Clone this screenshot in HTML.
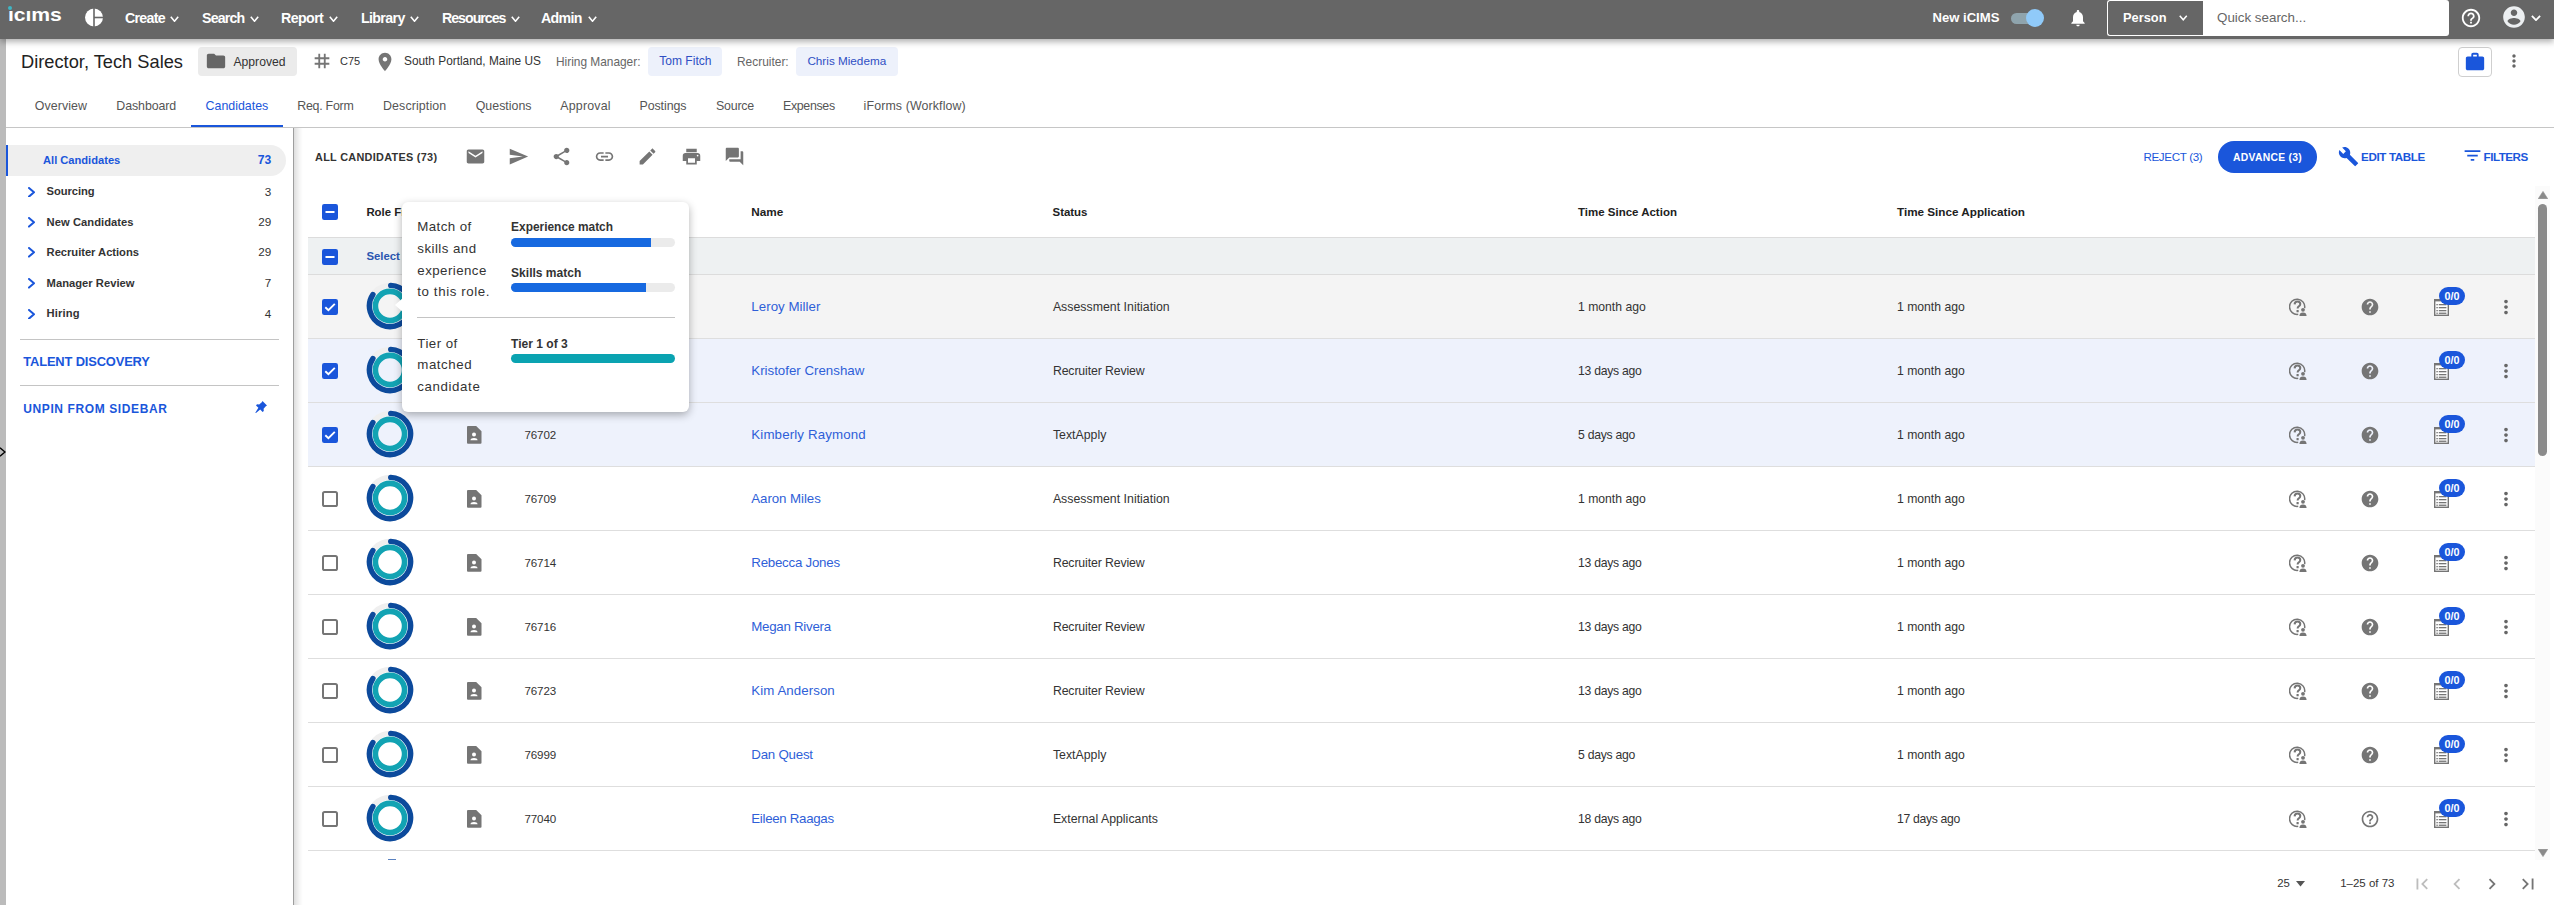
<!DOCTYPE html><html><head><meta charset="utf-8"><style>
html,body{margin:0;padding:0;}
body{width:2554px;height:905px;overflow:hidden;position:relative;background:#fff;font-family:"Liberation Sans",sans-serif;}
.t{position:absolute;white-space:nowrap;line-height:1;}
.b{position:absolute;display:block;}
</style></head><body>
<div class="b" style="left:0px;top:38px;width:6px;height:867px;background:#bbbbbb"></div>
<div class="b" style="left:294px;top:128px;width:9px;height:777px;background:linear-gradient(90deg,rgba(0,0,0,0.13),rgba(0,0,0,0.04) 60%,rgba(0,0,0,0))"></div>
<div class="b" style="left:6px;top:127px;width:2548px;height:1px;background:#c6c6c6"></div>
<div class="b" style="left:293px;top:128px;width:1px;height:777px;background:#9e9e9e"></div>
<div class="b" style="left:0px;top:0px;width:2554px;height:39px;background:#666666;box-shadow:0 3px 6px rgba(0,0,0,0.3);z-index:5"></div>
<div style="position:absolute;left:0;top:0;width:2554px;height:38px;z-index:6">
<div class="t" style="left:7.60px;top:6.40px;font-size:18.90px;color:#fff;font-weight:700;letter-spacing:-0.1px;transform:scaleX(1.12);transform-origin:0 0;">&#x131;c&#x131;ms</div>
<div class="b" style="left:8px;top:5.6px;width:4.199999999999999px;height:4.200000000000001px;background:#3fb6c4;border-radius:50%"></div>
<svg class="b" style="left:85px;top:8px;" width="18" height="19" viewBox="0 0 18 19"><circle cx="9" cy="9.5" r="9" fill="#fff"/><rect x="8.2" y="0" width="1.6" height="19" fill="#666"/><rect x="9" y="8.7" width="10" height="1.6" fill="#666"/></svg>
<div class="t" style="left:125.00px;top:10.58px;font-size:14.20px;color:#fff;font-weight:700;letter-spacing:-0.7px;">Create</div>
<svg class="b" style="left:170.4px;top:15.5px;" width="9" height="6" viewBox="0 0 9 6"><path d="M0.8 0.8 L4.5 5.2 L8.2 0.8" fill="none" stroke="#fff" stroke-width="1.6"/></svg>
<div class="t" style="left:202.00px;top:10.58px;font-size:14.20px;color:#fff;font-weight:700;letter-spacing:-0.827px;">Search</div>
<svg class="b" style="left:250px;top:15.5px;" width="9" height="6" viewBox="0 0 9 6"><path d="M0.8 0.8 L4.5 5.2 L8.2 0.8" fill="none" stroke="#fff" stroke-width="1.6"/></svg>
<div class="t" style="left:281.00px;top:10.58px;font-size:14.20px;color:#fff;font-weight:700;letter-spacing:-0.575px;">Report</div>
<svg class="b" style="left:329px;top:15.5px;" width="9" height="6" viewBox="0 0 9 6"><path d="M0.8 0.8 L4.5 5.2 L8.2 0.8" fill="none" stroke="#fff" stroke-width="1.6"/></svg>
<div class="t" style="left:361.00px;top:10.58px;font-size:14.20px;color:#fff;font-weight:700;letter-spacing:-0.634px;">Library</div>
<svg class="b" style="left:410px;top:15.5px;" width="9" height="6" viewBox="0 0 9 6"><path d="M0.8 0.8 L4.5 5.2 L8.2 0.8" fill="none" stroke="#fff" stroke-width="1.6"/></svg>
<div class="t" style="left:442.00px;top:10.58px;font-size:14.20px;color:#fff;font-weight:700;letter-spacing:-1.012px;">Resources</div>
<svg class="b" style="left:511px;top:15.5px;" width="9" height="6" viewBox="0 0 9 6"><path d="M0.8 0.8 L4.5 5.2 L8.2 0.8" fill="none" stroke="#fff" stroke-width="1.6"/></svg>
<div class="t" style="left:541.00px;top:10.58px;font-size:14.20px;color:#fff;font-weight:700;letter-spacing:-0.675px;">Admin</div>
<svg class="b" style="left:588px;top:15.5px;" width="9" height="6" viewBox="0 0 9 6"><path d="M0.8 0.8 L4.5 5.2 L8.2 0.8" fill="none" stroke="#fff" stroke-width="1.6"/></svg>
<div class="t" style="left:1932.50px;top:11.42px;font-size:13.09px;color:#fff;font-weight:700;">New iCIMS</div>
<div class="b" style="left:2011px;top:12.8px;width:32px;height:10.8px;background:#8fa4ad;border-radius:6px"></div>
<div class="b" style="left:2026px;top:9px;width:18px;height:18px;background:#90caf9;border-radius:50%"></div>
<svg class="b" style="left:2067.5px;top:8px;" width="20" height="20" viewBox="0 0 24 24"><path fill="#fff" d="M12 22c1.1 0 2-.9 2-2h-4c0 1.1.89 2 2 2zm6-6v-5c0-3.07-1.64-5.64-4.5-6.32V4c0-.83-.67-1.5-1.5-1.5s-1.5.67-1.5 1.5v.68C7.63 5.36 6 7.92 6 11v5l-2 2v1h16v-1l-2-2z"/></svg>
<div class="b" style="left:2107px;top:0px;width:96px;height:36px;border:1px solid #fff;border-right:none;border-radius:3px 0 0 3px;box-sizing:border-box"></div>
<div class="t" style="left:2123.00px;top:11.64px;font-size:12.83px;color:#fff;font-weight:700;">Person</div>
<svg class="b" style="left:2179px;top:15px;" width="8.5" height="5.5" viewBox="0 0 8.5 5.5"><path d="M0.75 0.75 L4.25 4.75 L7.75 0.75" fill="none" stroke="#fff" stroke-width="1.5"/></svg>
<div class="b" style="left:2203px;top:0px;width:246px;height:36px;background:#fff;border-radius:0 3px 3px 0"></div>
<div class="t" style="left:2217.00px;top:11.49px;font-size:13.36px;color:#666;font-weight:400;">Quick search...</div>
<svg class="b" style="left:2460px;top:7px;" width="22" height="22" viewBox="0 0 24 24"><path fill="#fff" d="M11 18h2v-2h-2v2zm1-16C6.48 2 2 6.48 2 12s4.48 10 10 10 10-4.48 10-10S17.52 2 12 2zm0 18c-4.41 0-8-3.59-8-8s3.59-8 8-8 8 3.59 8 8-3.59 8-8 8zm0-14c-2.21 0-4 1.79-4 4h2c0-1.1.9-2 2-2s2 .9 2 2c0 2-3 1.75-3 5h2c0-2.25 3-2.5 3-5 0-2.21-1.79-4-4-4z"/></svg>
<svg class="b" style="left:2501px;top:4.3px;" width="26" height="26" viewBox="0 0 24 24"><path fill="#eceff1" d="M12 2C6.48 2 2 6.480 2 12s4.48 10 10 10 10-4.48 10-10S17.52 2 12 2zm0 3c1.66 0 3 1.34 3 3s-1.34 3-3 3-3-1.34-3-3 1.34-3 3-3zm0 14.2c-2.5 0-4.71-1.28-6-3.22.03-1.99 4-3.08 6-3.08 1.99 0 5.970 1.09 6 3.08-1.29 1.94-3.5 3.22-6 3.22z"/></svg>
<svg class="b" style="left:2531px;top:14.5px;" width="10" height="6" viewBox="0 0 10 6"><path d="M0.9 0.9 L5.0 5.1 L9.1 0.9" fill="none" stroke="#fff" stroke-width="1.8"/></svg>
</div>
<div class="t" style="left:21.00px;top:52.75px;font-size:18.26px;color:#222;font-weight:400;">Director, Tech Sales</div>
<div class="b" style="left:198px;top:47px;width:99px;height:29px;background:#ebebeb;border-radius:4px"></div>
<svg class="b" style="left:204.5px;top:50px;" width="22" height="22" viewBox="0 0 24 24"><path fill="#666" d="M10 4H4c-1.1 0-1.99.9-1.99 2L2 18c0 1.1.9 2 2 2h16c1.1 0 2-.9 2-2V8c0-1.1-.9-2-2-2h-8l-2-2z"/></svg>
<div class="t" style="left:233.50px;top:55.52px;font-size:12.15px;color:#333;font-weight:400;">Approved</div>
<svg class="b" style="left:311px;top:50px;" width="22" height="22" viewBox="0 0 24 24"><path fill="#757575" d="M20 10V8h-4V4h-2v4h-4V4H8v4H4v2h4v4H4v2h4v4h2v-4h4v4h2v-4h4v-2h-4v-4h4zm-6 4h-4v-4h4v4z"/></svg>
<div class="t" style="left:340.00px;top:56.48px;font-size:11.01px;color:#333;font-weight:400;">C75</div>
<svg class="b" style="left:374px;top:51px;" width="22" height="22" viewBox="0 0 24 24"><path fill="#757575" d="M12 2C8.13 2 5 5.13 5 9c0 5.25 7 13 7 13s7-7.75 7-13c0-3.87-3.13-7-7-7zm0 9.5c-1.38 0-2.5-1.12-2.5-2.5s1.12-2.5 2.5-2.5 2.5 1.12 2.5 2.5-1.12 2.5-2.5 2.5z"/></svg>
<div class="t" style="left:404.00px;top:55.77px;font-size:11.85px;color:#333;font-weight:400;">South Portland, Maine US</div>
<div class="t" style="left:556.00px;top:57.33px;font-size:11.89px;color:#666;font-weight:400;">Hiring Manager:</div>
<div class="b" style="left:648px;top:47px;width:74px;height:29px;background:#edf1fb;border-radius:4px"></div>
<div class="t" style="left:659.30px;top:54.80px;font-size:12.04px;color:#2f4fc4;font-weight:400;">Tom Fitch</div>
<div class="t" style="left:737.00px;top:57.30px;font-size:11.93px;color:#666;font-weight:400;">Recruiter:</div>
<div class="b" style="left:796px;top:47px;width:102px;height:29px;background:#edf1fb;border-radius:4px"></div>
<div class="t" style="left:807.40px;top:55.07px;font-size:11.73px;color:#2f4fc4;font-weight:400;">Chris Miedema</div>
<div class="b" style="left:2458px;top:46.5px;width:34px;height:30.0px;border:1px solid #cfcfcf;border-radius:4px;box-sizing:border-box"></div>
<svg class="b" style="left:2463.5px;top:50.5px;" width="22" height="22" viewBox="0 0 24 24"><path fill="#1a56db" d="M20 6h-4V4c0-1.11-.89-2-2-2h-4c-1.11 0-2 .89-2 2v2H4c-1.11 0-1.99.89-1.99 2L2 19c0 1.11.89 2 2 2h16c1.11 0 2-.89 2-2V8c0-1.11-.89-2-2-2zm-6 0h-4V4h4v2z"/></svg>
<svg class="b" style="left:2503.8px;top:51.2px;" width="20" height="20" viewBox="0 0 24 24"><path fill="#666" d="M12 8c1.1 0 2-.9 2-2s-.9-2-2-2-2 .9-2 2 .9 2 2 2zm0 2c-1.1 0-2 .9-2 2s.9 2 2 2 2-.9 2-2-.9-2-2-2zm0 6c-1.1 0-2 .9-2 2s.9 2 2 2 2-.9 2-2-.9-2-2-2z"/></svg>
<div class="t" style="left:34.80px;top:100.20px;font-size:12.40px;color:#555;font-weight:400;letter-spacing:0.066px;">Overview</div>
<div class="t" style="left:116.30px;top:100.20px;font-size:12.40px;color:#555;font-weight:400;letter-spacing:-0.084px;">Dashboard</div>
<div class="t" style="left:205.60px;top:100.20px;font-size:12.40px;color:#1a56db;font-weight:400;letter-spacing:-0.003px;">Candidates</div>
<div class="t" style="left:297.20px;top:100.20px;font-size:12.40px;color:#555;font-weight:400;letter-spacing:-0.24px;">Req. Form</div>
<div class="t" style="left:383.00px;top:100.20px;font-size:12.40px;color:#555;font-weight:400;letter-spacing:0.125px;">Description</div>
<div class="t" style="left:475.70px;top:100.20px;font-size:12.40px;color:#555;font-weight:400;letter-spacing:0.008px;">Questions</div>
<div class="t" style="left:560.30px;top:100.20px;font-size:12.40px;color:#555;font-weight:400;letter-spacing:0.195px;">Approval</div>
<div class="t" style="left:639.50px;top:100.20px;font-size:12.40px;color:#555;font-weight:400;letter-spacing:-0.082px;">Postings</div>
<div class="t" style="left:716.00px;top:100.20px;font-size:12.40px;color:#555;font-weight:400;letter-spacing:-0.214px;">Source</div>
<div class="t" style="left:783.00px;top:100.20px;font-size:12.40px;color:#555;font-weight:400;letter-spacing:-0.332px;">Expenses</div>
<div class="t" style="left:863.60px;top:100.20px;font-size:12.40px;color:#555;font-weight:400;letter-spacing:0.115px;">iForms (Workflow)</div>
<div class="b" style="left:191px;top:125px;width:92px;height:2px;background:#1a56db"></div>
<div class="b" style="left:6px;top:145px;width:280px;height:31px;background:#efefef;border-radius:0 15.5px 15.5px 0"></div>
<div class="b" style="left:6px;top:145px;width:2px;height:31px;background:#1a56db"></div>
<div class="t" style="left:43.00px;top:154.68px;font-size:11.13px;color:#1a56db;font-weight:700;">All Candidates</div>
<div class="t" style="left:257.80px;top:153.82px;font-size:12.14px;color:#1a56db;font-weight:700;">73</div>
<svg class="b" style="left:27.6px;top:186.8px;" width="7" height="10.6" viewBox="0 0 7 10.6"><path d="M1.0 1.0 L6.0 5.3 L1.0 9.6" fill="none" stroke="#1a56db" stroke-width="2" stroke-linecap="round" stroke-linejoin="round"/></svg>
<div class="t" style="left:46.60px;top:186.32px;font-size:11.20px;color:#333;font-weight:700;letter-spacing:-0.079px;">Sourcing</div>
<div class="t" style="left:264.80px;top:185.91px;font-size:11.69px;color:#333;font-weight:400;">3</div>
<svg class="b" style="left:27.6px;top:217.3px;" width="7" height="10.6" viewBox="0 0 7 10.6"><path d="M1.0 1.0 L6.0 5.3 L1.0 9.6" fill="none" stroke="#1a56db" stroke-width="2" stroke-linecap="round" stroke-linejoin="round"/></svg>
<div class="t" style="left:46.60px;top:216.82px;font-size:11.20px;color:#333;font-weight:700;letter-spacing:0.043px;">New Candidates</div>
<div class="t" style="left:258.30px;top:216.41px;font-size:11.69px;color:#333;font-weight:400;">29</div>
<svg class="b" style="left:27.6px;top:247.3px;" width="7" height="10.6" viewBox="0 0 7 10.6"><path d="M1.0 1.0 L6.0 5.3 L1.0 9.6" fill="none" stroke="#1a56db" stroke-width="2" stroke-linecap="round" stroke-linejoin="round"/></svg>
<div class="t" style="left:46.60px;top:246.82px;font-size:11.20px;color:#333;font-weight:700;letter-spacing:-0.032px;">Recruiter Actions</div>
<div class="t" style="left:258.30px;top:246.41px;font-size:11.69px;color:#333;font-weight:400;">29</div>
<svg class="b" style="left:27.6px;top:278.2px;" width="7" height="10.6" viewBox="0 0 7 10.6"><path d="M1.0 1.0 L6.0 5.3 L1.0 9.6" fill="none" stroke="#1a56db" stroke-width="2" stroke-linecap="round" stroke-linejoin="round"/></svg>
<div class="t" style="left:46.60px;top:277.72px;font-size:11.20px;color:#333;font-weight:700;letter-spacing:0.017px;">Manager Review</div>
<div class="t" style="left:264.80px;top:277.31px;font-size:11.69px;color:#333;font-weight:400;">7</div>
<svg class="b" style="left:27.6px;top:308.59999999999997px;" width="7" height="10.6" viewBox="0 0 7 10.6"><path d="M1.0 1.0 L6.0 5.3 L1.0 9.6" fill="none" stroke="#1a56db" stroke-width="2" stroke-linecap="round" stroke-linejoin="round"/></svg>
<div class="t" style="left:46.60px;top:308.12px;font-size:11.20px;color:#333;font-weight:700;letter-spacing:0.141px;">Hiring</div>
<div class="t" style="left:264.80px;top:307.71px;font-size:11.69px;color:#333;font-weight:400;">4</div>
<div class="b" style="left:20px;top:339px;width:259px;height:1px;background:#c4c4c4"></div>
<div class="t" style="left:23.30px;top:356.48px;font-size:12.90px;color:#1a56db;font-weight:700;letter-spacing:-0.157px;">TALENT DISCOVERY</div>
<div class="b" style="left:20px;top:385px;width:259px;height:1px;background:#c4c4c4"></div>
<div class="t" style="left:23.30px;top:403.24px;font-size:12.01px;color:#1a56db;font-weight:700;letter-spacing:0.6px;">UNPIN FROM SIDEBAR</div>
<svg class="b" style="left:255px;top:401px;" width="12" height="12" viewBox="0 0 12 12"><path fill="#1a56db" d="M7.5 0 L12 4.5 L10.8 5.2 L8.6 7.8 L8.8 10 L7.6 11 L5.2 8.6 L1 12 L0.3 11.7 L3.4 6.8 L1 4.4 L2 3.2 L4.2 3.4 L6.8 1.2 Z"/></svg>
<svg class="b" style="left:0px;top:447px;" width="6" height="10" viewBox="0 0 6 10"><path d="M0 0.8 L5 5 L0 9.2" fill="none" stroke="#000" stroke-width="1.4"/></svg>
<div class="t" style="left:315.00px;top:151.99px;font-size:10.87px;color:#333;font-weight:700;letter-spacing:0.3px;">ALL CANDIDATES (73)</div>
<svg class="b" style="left:465px;top:146px;" width="21" height="21" viewBox="0 0 24 24"><path fill="#757575" d="M20 4H4c-1.1 0-1.99.9-1.99 2L2 18c0 1.1.9 2 2 2h16c1.1 0 2-.9 2-2V6c0-1.1-.9-2-2-2zm0 4l-8 5-8-5V6l8 5 8-5v2z"/></svg>
<svg class="b" style="left:507.5px;top:146px;" width="21" height="21" viewBox="0 0 24 24"><path fill="#757575" d="M2.01 21L23 12 2.01 3 2 10l15 2-15 2z"/></svg>
<svg class="b" style="left:551px;top:146px;" width="21" height="21" viewBox="0 0 24 24"><path fill="#757575" d="M18 16.08c-.76 0-1.44.3-1.96.77L8.91 12.7c.05-.23.09-.46.09-.7s-.04-.47-.09-.7l7.05-4.11c.54.5 1.25.81 2.04.81 1.66 0 3-1.34 3-3s-1.34-3-3-3-3 1.34-3 3c0 .24.04.47.09.7L8.04 9.81C7.5 9.31 6.79 9 6 9c-1.66 0-3 1.34-3 3s1.34 3 3 3c.79 0 1.5-.31 2.04-.81l7.12 4.16c-.05.21-.08.43-.08.65 0 1.61 1.31 2.92 2.92 2.92 1.61 0 2.92-1.31 2.92-2.92s-1.31-2.92-2.92-2.92z"/></svg>
<svg class="b" style="left:593.5px;top:146px;" width="21" height="21" viewBox="0 0 24 24"><path fill="#757575" d="M3.9 12c0-1.71 1.39-3.1 3.1-3.1h4V7H7c-2.76 0-5 2.24-5 5s2.24 5 5 5h4v-1.9H7c-1.71 0-3.1-1.39-3.1-3.1zM8 13h8v-2H8v2zm9-6h-4v1.9h4c1.71 0 3.1 1.39 3.1 3.1s-1.39 3.1-3.1 3.1h-4V17h4c2.76 0 5-2.24 5-5s-2.24-5-5-5z"/></svg>
<svg class="b" style="left:637px;top:146px;" width="21" height="21" viewBox="0 0 24 24"><path fill="#757575" d="M3 17.25V21h3.75L17.81 9.94l-3.75-3.75L3 17.25zM20.71 7.04c.39-.39.39-1.02 0-1.41l-2.34-2.34c-.39-.39-1.02-.39-1.41 0l-1.83 1.83 3.75 3.75 1.83-1.83z"/></svg>
<svg class="b" style="left:680.5px;top:146px;" width="21" height="21" viewBox="0 0 24 24"><path fill="#757575" d="M19 8H5c-1.66 0-3 1.34-3 3v6h4v4h12v-4h4v-6c0-1.66-1.34-3-3-3zm-3 11H8v-5h8v5zm3-7c-.55 0-1-.45-1-1s.45-1 1-1 1 .45 1 1-.45 1-1 1zm-1-9H6v4h12V3z"/></svg>
<svg class="b" style="left:723.5px;top:146px;" width="21" height="21" viewBox="0 0 24 24"><path fill="#757575" d="M21 6h-2v9H6v2c0 .55.45 1 1 1h11l4 4V7c0-.55-.45-1-1-1zm-4 6V3c0-.55-.45-1-1-1H3c-.55 0-1 .45-1 1v14l4-4h10c.55 0 1-.45 1-1z"/></svg>
<div class="t" style="left:2143.40px;top:151.48px;font-size:11.60px;color:#1a56db;font-weight:400;letter-spacing:-0.33px;">REJECT (3)</div>
<div class="b" style="left:2218px;top:141px;width:99px;height:32px;background:#1a56db;border-radius:16px"></div>
<div class="t" style="left:2233.00px;top:152.54px;font-size:10.34px;color:#fff;font-weight:700;letter-spacing:0.3px;">ADVANCE (3)</div>
<svg class="b" style="left:2338px;top:146px;" width="21" height="21" viewBox="0 0 24 24"><path fill="#1a56db" d="M22.7 19l-9.1-9.1c.9-2.3.4-5-1.5-6.9-2-2-5-2.4-7.4-1.3L9 6 6 9 1.6 4.7C.4 7.1.9 10.1 2.9 12.1c1.9 1.9 4.6 2.4 6.9 1.5l9.1 9.1c.4.4 1 .4 1.4 0l2.3-2.3c.5-.4.5-1.1.1-1.4z"/></svg>
<div class="t" style="left:2361.00px;top:151.48px;font-size:11.60px;color:#1a56db;font-weight:700;letter-spacing:-0.345px;">EDIT TABLE</div>
<svg class="b" style="left:2462.2px;top:144.8px;" width="21" height="21" viewBox="0 0 24 24"><path fill="#1a56db" d="M10 18h4v-2h-4v2zM3 6v2h18V6H3zm3 7h12v-2H6v2z"/></svg>
<div class="t" style="left:2483.60px;top:151.48px;font-size:11.60px;color:#1a56db;font-weight:700;letter-spacing:-0.467px;">FILTERS</div>
<svg class="b" style="left:321.5px;top:204px;" width="16" height="16" viewBox="0 0 16 16"><rect x="0" y="0" width="16" height="16" rx="2.2" fill="#1a56db"/><rect x="3.5" y="7" width="9" height="2" fill="#fff"/></svg>
<div class="t" style="left:366.40px;top:206.75px;font-size:11.40px;color:#222;font-weight:700;">Role Fit</div>
<div class="t" style="left:751.20px;top:206.45px;font-size:11.75px;color:#222;font-weight:700;">Name</div>
<div class="t" style="left:1052.50px;top:206.70px;font-size:11.45px;color:#222;font-weight:700;">Status</div>
<div class="t" style="left:1578.00px;top:206.67px;font-size:11.49px;color:#222;font-weight:700;">Time Since Action</div>
<div class="t" style="left:1897.00px;top:206.30px;font-size:11.69px;color:#222;font-weight:700;">Time Since Application</div>
<div class="b" style="left:308px;top:237px;width:2227px;height:1px;background:#dcdcdc"></div>
<div class="b" style="left:308px;top:238px;width:2227px;height:36px;background:#eef1f2"></div>
<div class="b" style="left:308px;top:274px;width:2227px;height:1px;background:#dcdcdc"></div>
<svg class="b" style="left:321.5px;top:249px;" width="16" height="16" viewBox="0 0 16 16"><rect x="0" y="0" width="16" height="16" rx="2.2" fill="#1a56db"/><rect x="3.5" y="7" width="9" height="2" fill="#fff"/></svg>
<div class="t" style="left:366.40px;top:250.88px;font-size:11.37px;color:#2a56b0;font-weight:700;">Select all 73</div>
<div class="b" style="left:308px;top:275px;width:2227px;height:63px;background:#f4f4f4"></div>
<div class="b" style="left:308px;top:338px;width:2227px;height:1px;background:#dedede"></div>
<svg class="b" style="left:321.5px;top:299.0px;" width="16" height="16" viewBox="0 0 16 16"><rect x="0" y="0" width="16" height="16" rx="2.2" fill="#1a56db"/><path d="M3.3 8.2 L6.4 11.2 L12.8 4.8" fill="none" stroke="#fff" stroke-width="1.9"/></svg>
<svg class="b" style="left:366.4px;top:282.0px;" width="48" height="48" viewBox="0 0 48 48"><circle cx="24" cy="24" r="20.6" fill="none" stroke="#efefef" stroke-width="5.4"/><path d="M24.72 3.41 A20.6 20.6 0 1 1 6.92 12.48" fill="none" stroke="#0c4a9c" stroke-width="5.4" stroke-linecap="round"/><circle cx="24" cy="24" r="14.6" fill="none" stroke="#12a3b3" stroke-width="5.6"/></svg>
<svg class="b" style="left:466.8px;top:297.5px;" width="15" height="18" viewBox="0 0 15 18"><path fill="#757575" d="M1 0 H9.2 L14.5 5.3 V16.8 Q14.5 17.8 13.5 17.8 H1 Q0 17.8 0 16.8 V1 Q0 0 1 0 Z"/><circle cx="7" cy="8.6" r="2" fill="#fff"/><path fill="#fff" d="M3.4 14.3 Q3.8 12 7 12 Q10.2 12 10.6 14.3 Z"/></svg>
<div class="t" style="left:524.40px;top:300.88px;font-size:11.60px;color:#333;font-weight:400;letter-spacing:-0.091px;">76700</div>
<div class="t" style="left:751.30px;top:300.44px;font-size:13.30px;color:#2f5fd8;font-weight:400;letter-spacing:0.039px;">Leroy Miller</div>
<div class="t" style="left:1052.90px;top:300.89px;font-size:12.30px;color:#333;font-weight:400;letter-spacing:0.028px;">Assessment Initiation</div>
<div class="t" style="left:1578.00px;top:300.97px;font-size:12.20px;color:#333;font-weight:400;letter-spacing:-0.002px;">1 month ago</div>
<div class="t" style="left:1897.00px;top:300.97px;font-size:12.20px;color:#333;font-weight:400;letter-spacing:-0.002px;">1 month ago</div>
<svg class="b" style="left:2288.7px;top:298.0px;" width="18" height="18" viewBox="0 0 18 18"><path fill="none" stroke="#757575" stroke-width="1.5" d="M15.6 10.2 A7.6 7.6 0 1 0 9.2 16.3"/><path fill="none" stroke="#757575" stroke-width="2" d="M5.6 6.4 Q5.8 3.6 8.5 3.6 Q11.3 3.6 11.3 6.1 Q11.3 7.5 9.8 8.3 Q8.6 9 8.6 10.6"/><rect x="7.5" y="12" width="2.2" height="2.2" rx="0.5" fill="#757575"/><circle cx="14" cy="11.8" r="1.9" fill="#757575"/><path fill="#757575" d="M10.4 18 Q10.6 14.6 14 14.6 Q17.4 14.6 17.6 18 Z"/></svg>
<svg class="b" style="left:2359.5px;top:296.5px;" width="20" height="20" viewBox="0 0 24 24"><path fill="#757575" d="M12 2C6.48 2 2 6.48 2 12s4.48 10 10 10 10-4.48 10-10S17.52 2 12 2zm1 17h-2v-2h2v2zm2.07-7.75l-.9.92C13.45 12.9 13 13.5 13 15h-2v-.5c0-1.1.45-2.1 1.17-2.830l1.24-1.26c.37-.36.59-.86.59-1.41 0-1.1-.9-2-2-2s-2 .9-2 2H8c0-2.21 1.79-4 4-4s4 1.79 4 4c0 .88-.36 1.68-.93 2.25z"/></svg>
<svg class="b" style="left:2433.5px;top:299.0px;" width="15" height="17" viewBox="0 0 15 17"><rect x="0.7" y="0.7" width="13.6" height="15.6" fill="#fff" stroke="#757575" stroke-width="1.4"/><rect x="0" y="0" width="15" height="2.4" fill="#757575"/><rect x="2.4" y="5" width="1.4" height="1.3" fill="#757575"/><rect x="4.8" y="5" width="7.6" height="1.3" fill="#757575"/><rect x="2.4" y="8" width="1.4" height="1.3" fill="#757575"/><rect x="4.8" y="8" width="7.6" height="1.3" fill="#757575"/><rect x="2.4" y="11" width="1.4" height="1.3" fill="#757575"/><rect x="4.8" y="11" width="7.6" height="1.3" fill="#757575"/><rect x="2.4" y="13.6" width="1.4" height="1.3" fill="#757575"/><rect x="4.8" y="13.6" width="7.6" height="1.3" fill="#757575"/></svg>
<div class="b" style="left:2438.8px;top:287.0px;width:26.199999999999818px;height:18.0px;background:#1a56db;border-radius:9px"></div>
<div class="t" style="left:2444.60px;top:291.07px;font-size:10.79px;color:#fff;font-weight:700;">0/0</div>
<svg class="b" style="left:2494.7px;top:296.0px;" width="22" height="22" viewBox="0 0 24 24"><path fill="#666" d="M12 8c1.1 0 2-.9 2-2s-.9-2-2-2-2 .9-2 2 .9 2 2 2zm0 2c-1.1 0-2 .9-2 2s.9 2 2 2 2-.9 2-2-.9-2-2-2zm0 6c-1.1 0-2 .9-2 2s.9 2 2 2 2-.9 2-2-.9-2-2-2z"/></svg>
<div class="b" style="left:308px;top:339px;width:2227px;height:63px;background:#eef2fc"></div>
<div class="b" style="left:308px;top:402px;width:2227px;height:1px;background:#dedede"></div>
<svg class="b" style="left:321.5px;top:363.0px;" width="16" height="16" viewBox="0 0 16 16"><rect x="0" y="0" width="16" height="16" rx="2.2" fill="#1a56db"/><path d="M3.3 8.2 L6.4 11.2 L12.8 4.8" fill="none" stroke="#fff" stroke-width="1.9"/></svg>
<svg class="b" style="left:366.4px;top:346.0px;" width="48" height="48" viewBox="0 0 48 48"><circle cx="24" cy="24" r="20.6" fill="none" stroke="#efefef" stroke-width="5.4"/><path d="M24.72 3.41 A20.6 20.6 0 1 1 6.92 12.48" fill="none" stroke="#0c4a9c" stroke-width="5.4" stroke-linecap="round"/><circle cx="24" cy="24" r="14.6" fill="none" stroke="#12a3b3" stroke-width="5.6"/></svg>
<svg class="b" style="left:466.8px;top:361.5px;" width="15" height="18" viewBox="0 0 15 18"><path fill="#757575" d="M1 0 H9.2 L14.5 5.3 V16.8 Q14.5 17.8 13.5 17.8 H1 Q0 17.8 0 16.8 V1 Q0 0 1 0 Z"/><circle cx="7" cy="8.6" r="2" fill="#fff"/><path fill="#fff" d="M3.4 14.3 Q3.8 12 7 12 Q10.2 12 10.6 14.3 Z"/></svg>
<div class="t" style="left:524.40px;top:364.88px;font-size:11.60px;color:#333;font-weight:400;letter-spacing:-0.091px;">76701</div>
<div class="t" style="left:751.30px;top:364.44px;font-size:13.30px;color:#2f5fd8;font-weight:400;letter-spacing:-0.005px;">Kristofer Crenshaw</div>
<div class="t" style="left:1052.90px;top:364.89px;font-size:12.30px;color:#333;font-weight:400;letter-spacing:-0.127px;">Recruiter Review</div>
<div class="t" style="left:1578.00px;top:364.97px;font-size:12.20px;color:#333;font-weight:400;letter-spacing:-0.27px;">13 days ago</div>
<div class="t" style="left:1897.00px;top:364.97px;font-size:12.20px;color:#333;font-weight:400;letter-spacing:-0.002px;">1 month ago</div>
<svg class="b" style="left:2288.7px;top:362.0px;" width="18" height="18" viewBox="0 0 18 18"><path fill="none" stroke="#757575" stroke-width="1.5" d="M15.6 10.2 A7.6 7.6 0 1 0 9.2 16.3"/><path fill="none" stroke="#757575" stroke-width="2" d="M5.6 6.4 Q5.8 3.6 8.5 3.6 Q11.3 3.6 11.3 6.1 Q11.3 7.5 9.8 8.3 Q8.6 9 8.6 10.6"/><rect x="7.5" y="12" width="2.2" height="2.2" rx="0.5" fill="#757575"/><circle cx="14" cy="11.8" r="1.9" fill="#757575"/><path fill="#757575" d="M10.4 18 Q10.6 14.6 14 14.6 Q17.4 14.6 17.6 18 Z"/></svg>
<svg class="b" style="left:2359.5px;top:360.5px;" width="20" height="20" viewBox="0 0 24 24"><path fill="#757575" d="M12 2C6.48 2 2 6.48 2 12s4.48 10 10 10 10-4.48 10-10S17.52 2 12 2zm1 17h-2v-2h2v2zm2.07-7.75l-.9.92C13.45 12.9 13 13.5 13 15h-2v-.5c0-1.1.45-2.1 1.17-2.830l1.24-1.26c.37-.36.59-.86.59-1.41 0-1.1-.9-2-2-2s-2 .9-2 2H8c0-2.21 1.79-4 4-4s4 1.79 4 4c0 .88-.36 1.68-.93 2.25z"/></svg>
<svg class="b" style="left:2433.5px;top:363.0px;" width="15" height="17" viewBox="0 0 15 17"><rect x="0.7" y="0.7" width="13.6" height="15.6" fill="#fff" stroke="#757575" stroke-width="1.4"/><rect x="0" y="0" width="15" height="2.4" fill="#757575"/><rect x="2.4" y="5" width="1.4" height="1.3" fill="#757575"/><rect x="4.8" y="5" width="7.6" height="1.3" fill="#757575"/><rect x="2.4" y="8" width="1.4" height="1.3" fill="#757575"/><rect x="4.8" y="8" width="7.6" height="1.3" fill="#757575"/><rect x="2.4" y="11" width="1.4" height="1.3" fill="#757575"/><rect x="4.8" y="11" width="7.6" height="1.3" fill="#757575"/><rect x="2.4" y="13.6" width="1.4" height="1.3" fill="#757575"/><rect x="4.8" y="13.6" width="7.6" height="1.3" fill="#757575"/></svg>
<div class="b" style="left:2438.8px;top:351.0px;width:26.199999999999818px;height:18.0px;background:#1a56db;border-radius:9px"></div>
<div class="t" style="left:2444.60px;top:355.07px;font-size:10.79px;color:#fff;font-weight:700;">0/0</div>
<svg class="b" style="left:2494.7px;top:360.0px;" width="22" height="22" viewBox="0 0 24 24"><path fill="#666" d="M12 8c1.1 0 2-.9 2-2s-.9-2-2-2-2 .9-2 2 .9 2 2 2zm0 2c-1.1 0-2 .9-2 2s.9 2 2 2 2-.9 2-2-.9-2-2-2zm0 6c-1.1 0-2 .9-2 2s.9 2 2 2 2-.9 2-2-.9-2-2-2z"/></svg>
<div class="b" style="left:308px;top:403px;width:2227px;height:63px;background:#eef2fc"></div>
<div class="b" style="left:308px;top:466px;width:2227px;height:1px;background:#dedede"></div>
<svg class="b" style="left:321.5px;top:427.0px;" width="16" height="16" viewBox="0 0 16 16"><rect x="0" y="0" width="16" height="16" rx="2.2" fill="#1a56db"/><path d="M3.3 8.2 L6.4 11.2 L12.8 4.8" fill="none" stroke="#fff" stroke-width="1.9"/></svg>
<svg class="b" style="left:366.4px;top:410.0px;" width="48" height="48" viewBox="0 0 48 48"><circle cx="24" cy="24" r="20.6" fill="none" stroke="#efefef" stroke-width="5.4"/><path d="M24.72 3.41 A20.6 20.6 0 1 1 6.92 12.48" fill="none" stroke="#0c4a9c" stroke-width="5.4" stroke-linecap="round"/><circle cx="24" cy="24" r="14.6" fill="none" stroke="#12a3b3" stroke-width="5.6"/></svg>
<svg class="b" style="left:466.8px;top:425.5px;" width="15" height="18" viewBox="0 0 15 18"><path fill="#757575" d="M1 0 H9.2 L14.5 5.3 V16.8 Q14.5 17.8 13.5 17.8 H1 Q0 17.8 0 16.8 V1 Q0 0 1 0 Z"/><circle cx="7" cy="8.6" r="2" fill="#fff"/><path fill="#fff" d="M3.4 14.3 Q3.8 12 7 12 Q10.2 12 10.6 14.3 Z"/></svg>
<div class="t" style="left:524.40px;top:428.88px;font-size:11.60px;color:#333;font-weight:400;letter-spacing:-0.091px;">76702</div>
<div class="t" style="left:751.30px;top:428.44px;font-size:13.30px;color:#2f5fd8;font-weight:400;letter-spacing:0.135px;">Kimberly Raymond</div>
<div class="t" style="left:1052.90px;top:428.89px;font-size:12.30px;color:#333;font-weight:400;letter-spacing:0.02px;">TextApply</div>
<div class="t" style="left:1578.00px;top:428.97px;font-size:12.20px;color:#333;font-weight:400;letter-spacing:-0.268px;">5 days ago</div>
<div class="t" style="left:1897.00px;top:428.97px;font-size:12.20px;color:#333;font-weight:400;letter-spacing:-0.002px;">1 month ago</div>
<svg class="b" style="left:2288.7px;top:426.0px;" width="18" height="18" viewBox="0 0 18 18"><path fill="none" stroke="#757575" stroke-width="1.5" d="M15.6 10.2 A7.6 7.6 0 1 0 9.2 16.3"/><path fill="none" stroke="#757575" stroke-width="2" d="M5.6 6.4 Q5.8 3.6 8.5 3.6 Q11.3 3.6 11.3 6.1 Q11.3 7.5 9.8 8.3 Q8.6 9 8.6 10.6"/><rect x="7.5" y="12" width="2.2" height="2.2" rx="0.5" fill="#757575"/><circle cx="14" cy="11.8" r="1.9" fill="#757575"/><path fill="#757575" d="M10.4 18 Q10.6 14.6 14 14.6 Q17.4 14.6 17.6 18 Z"/></svg>
<svg class="b" style="left:2359.5px;top:424.5px;" width="20" height="20" viewBox="0 0 24 24"><path fill="#757575" d="M12 2C6.48 2 2 6.48 2 12s4.48 10 10 10 10-4.48 10-10S17.52 2 12 2zm1 17h-2v-2h2v2zm2.07-7.75l-.9.92C13.45 12.9 13 13.5 13 15h-2v-.5c0-1.1.45-2.1 1.17-2.830l1.24-1.26c.37-.36.59-.86.59-1.41 0-1.1-.9-2-2-2s-2 .9-2 2H8c0-2.21 1.79-4 4-4s4 1.79 4 4c0 .88-.36 1.68-.93 2.25z"/></svg>
<svg class="b" style="left:2433.5px;top:427.0px;" width="15" height="17" viewBox="0 0 15 17"><rect x="0.7" y="0.7" width="13.6" height="15.6" fill="#fff" stroke="#757575" stroke-width="1.4"/><rect x="0" y="0" width="15" height="2.4" fill="#757575"/><rect x="2.4" y="5" width="1.4" height="1.3" fill="#757575"/><rect x="4.8" y="5" width="7.6" height="1.3" fill="#757575"/><rect x="2.4" y="8" width="1.4" height="1.3" fill="#757575"/><rect x="4.8" y="8" width="7.6" height="1.3" fill="#757575"/><rect x="2.4" y="11" width="1.4" height="1.3" fill="#757575"/><rect x="4.8" y="11" width="7.6" height="1.3" fill="#757575"/><rect x="2.4" y="13.6" width="1.4" height="1.3" fill="#757575"/><rect x="4.8" y="13.6" width="7.6" height="1.3" fill="#757575"/></svg>
<div class="b" style="left:2438.8px;top:415.0px;width:26.199999999999818px;height:18.0px;background:#1a56db;border-radius:9px"></div>
<div class="t" style="left:2444.60px;top:419.07px;font-size:10.79px;color:#fff;font-weight:700;">0/0</div>
<svg class="b" style="left:2494.7px;top:424.0px;" width="22" height="22" viewBox="0 0 24 24"><path fill="#666" d="M12 8c1.1 0 2-.9 2-2s-.9-2-2-2-2 .9-2 2 .9 2 2 2zm0 2c-1.1 0-2 .9-2 2s.9 2 2 2 2-.9 2-2-.9-2-2-2zm0 6c-1.1 0-2 .9-2 2s.9 2 2 2 2-.9 2-2-.9-2-2-2z"/></svg>
<div class="b" style="left:308px;top:467px;width:2227px;height:63px;background:#fff"></div>
<div class="b" style="left:308px;top:530px;width:2227px;height:1px;background:#dedede"></div>
<svg class="b" style="left:321.5px;top:491.0px;" width="16" height="16" viewBox="0 0 16 16"><rect x="1" y="1" width="14" height="14" rx="1.6" fill="none" stroke="#757575" stroke-width="2"/></svg>
<svg class="b" style="left:366.4px;top:474.0px;" width="48" height="48" viewBox="0 0 48 48"><circle cx="24" cy="24" r="20.6" fill="none" stroke="#efefef" stroke-width="5.4"/><path d="M24.72 3.41 A20.6 20.6 0 1 1 6.92 12.48" fill="none" stroke="#0c4a9c" stroke-width="5.4" stroke-linecap="round"/><circle cx="24" cy="24" r="14.6" fill="none" stroke="#12a3b3" stroke-width="5.6"/></svg>
<svg class="b" style="left:466.8px;top:489.5px;" width="15" height="18" viewBox="0 0 15 18"><path fill="#757575" d="M1 0 H9.2 L14.5 5.3 V16.8 Q14.5 17.8 13.5 17.8 H1 Q0 17.8 0 16.8 V1 Q0 0 1 0 Z"/><circle cx="7" cy="8.6" r="2" fill="#fff"/><path fill="#fff" d="M3.4 14.3 Q3.8 12 7 12 Q10.2 12 10.6 14.3 Z"/></svg>
<div class="t" style="left:524.40px;top:492.88px;font-size:11.60px;color:#333;font-weight:400;letter-spacing:-0.091px;">76709</div>
<div class="t" style="left:751.30px;top:492.44px;font-size:13.30px;color:#2f5fd8;font-weight:400;letter-spacing:-0.065px;">Aaron Miles</div>
<div class="t" style="left:1052.90px;top:492.89px;font-size:12.30px;color:#333;font-weight:400;letter-spacing:0.028px;">Assessment Initiation</div>
<div class="t" style="left:1578.00px;top:492.97px;font-size:12.20px;color:#333;font-weight:400;letter-spacing:-0.002px;">1 month ago</div>
<div class="t" style="left:1897.00px;top:492.97px;font-size:12.20px;color:#333;font-weight:400;letter-spacing:-0.002px;">1 month ago</div>
<svg class="b" style="left:2288.7px;top:490.0px;" width="18" height="18" viewBox="0 0 18 18"><path fill="none" stroke="#757575" stroke-width="1.5" d="M15.6 10.2 A7.6 7.6 0 1 0 9.2 16.3"/><path fill="none" stroke="#757575" stroke-width="2" d="M5.6 6.4 Q5.8 3.6 8.5 3.6 Q11.3 3.6 11.3 6.1 Q11.3 7.5 9.8 8.3 Q8.6 9 8.6 10.6"/><rect x="7.5" y="12" width="2.2" height="2.2" rx="0.5" fill="#757575"/><circle cx="14" cy="11.8" r="1.9" fill="#757575"/><path fill="#757575" d="M10.4 18 Q10.6 14.6 14 14.6 Q17.4 14.6 17.6 18 Z"/></svg>
<svg class="b" style="left:2359.5px;top:488.5px;" width="20" height="20" viewBox="0 0 24 24"><path fill="#757575" d="M12 2C6.48 2 2 6.48 2 12s4.48 10 10 10 10-4.48 10-10S17.52 2 12 2zm1 17h-2v-2h2v2zm2.07-7.75l-.9.92C13.45 12.9 13 13.5 13 15h-2v-.5c0-1.1.45-2.1 1.17-2.830l1.24-1.26c.37-.36.59-.86.59-1.41 0-1.1-.9-2-2-2s-2 .9-2 2H8c0-2.21 1.79-4 4-4s4 1.79 4 4c0 .88-.36 1.68-.93 2.25z"/></svg>
<svg class="b" style="left:2433.5px;top:491.0px;" width="15" height="17" viewBox="0 0 15 17"><rect x="0.7" y="0.7" width="13.6" height="15.6" fill="#fff" stroke="#757575" stroke-width="1.4"/><rect x="0" y="0" width="15" height="2.4" fill="#757575"/><rect x="2.4" y="5" width="1.4" height="1.3" fill="#757575"/><rect x="4.8" y="5" width="7.6" height="1.3" fill="#757575"/><rect x="2.4" y="8" width="1.4" height="1.3" fill="#757575"/><rect x="4.8" y="8" width="7.6" height="1.3" fill="#757575"/><rect x="2.4" y="11" width="1.4" height="1.3" fill="#757575"/><rect x="4.8" y="11" width="7.6" height="1.3" fill="#757575"/><rect x="2.4" y="13.6" width="1.4" height="1.3" fill="#757575"/><rect x="4.8" y="13.6" width="7.6" height="1.3" fill="#757575"/></svg>
<div class="b" style="left:2438.8px;top:479.0px;width:26.199999999999818px;height:18.0px;background:#1a56db;border-radius:9px"></div>
<div class="t" style="left:2444.60px;top:483.07px;font-size:10.79px;color:#fff;font-weight:700;">0/0</div>
<svg class="b" style="left:2494.7px;top:488.0px;" width="22" height="22" viewBox="0 0 24 24"><path fill="#666" d="M12 8c1.1 0 2-.9 2-2s-.9-2-2-2-2 .9-2 2 .9 2 2 2zm0 2c-1.1 0-2 .9-2 2s.9 2 2 2 2-.9 2-2-.9-2-2-2zm0 6c-1.1 0-2 .9-2 2s.9 2 2 2 2-.9 2-2-.9-2-2-2z"/></svg>
<div class="b" style="left:308px;top:531px;width:2227px;height:63px;background:#fff"></div>
<div class="b" style="left:308px;top:594px;width:2227px;height:1px;background:#dedede"></div>
<svg class="b" style="left:321.5px;top:555.0px;" width="16" height="16" viewBox="0 0 16 16"><rect x="1" y="1" width="14" height="14" rx="1.6" fill="none" stroke="#757575" stroke-width="2"/></svg>
<svg class="b" style="left:366.4px;top:538.0px;" width="48" height="48" viewBox="0 0 48 48"><circle cx="24" cy="24" r="20.6" fill="none" stroke="#efefef" stroke-width="5.4"/><path d="M24.72 3.41 A20.6 20.6 0 1 1 6.92 12.48" fill="none" stroke="#0c4a9c" stroke-width="5.4" stroke-linecap="round"/><circle cx="24" cy="24" r="14.6" fill="none" stroke="#12a3b3" stroke-width="5.6"/></svg>
<svg class="b" style="left:466.8px;top:553.5px;" width="15" height="18" viewBox="0 0 15 18"><path fill="#757575" d="M1 0 H9.2 L14.5 5.3 V16.8 Q14.5 17.8 13.5 17.8 H1 Q0 17.8 0 16.8 V1 Q0 0 1 0 Z"/><circle cx="7" cy="8.6" r="2" fill="#fff"/><path fill="#fff" d="M3.4 14.3 Q3.8 12 7 12 Q10.2 12 10.6 14.3 Z"/></svg>
<div class="t" style="left:524.40px;top:556.88px;font-size:11.60px;color:#333;font-weight:400;letter-spacing:-0.091px;">76714</div>
<div class="t" style="left:751.30px;top:556.44px;font-size:13.30px;color:#2f5fd8;font-weight:400;letter-spacing:-0.244px;">Rebecca Jones</div>
<div class="t" style="left:1052.90px;top:556.89px;font-size:12.30px;color:#333;font-weight:400;letter-spacing:-0.127px;">Recruiter Review</div>
<div class="t" style="left:1578.00px;top:556.97px;font-size:12.20px;color:#333;font-weight:400;letter-spacing:-0.27px;">13 days ago</div>
<div class="t" style="left:1897.00px;top:556.97px;font-size:12.20px;color:#333;font-weight:400;letter-spacing:-0.002px;">1 month ago</div>
<svg class="b" style="left:2288.7px;top:554.0px;" width="18" height="18" viewBox="0 0 18 18"><path fill="none" stroke="#757575" stroke-width="1.5" d="M15.6 10.2 A7.6 7.6 0 1 0 9.2 16.3"/><path fill="none" stroke="#757575" stroke-width="2" d="M5.6 6.4 Q5.8 3.6 8.5 3.6 Q11.3 3.6 11.3 6.1 Q11.3 7.5 9.8 8.3 Q8.6 9 8.6 10.6"/><rect x="7.5" y="12" width="2.2" height="2.2" rx="0.5" fill="#757575"/><circle cx="14" cy="11.8" r="1.9" fill="#757575"/><path fill="#757575" d="M10.4 18 Q10.6 14.6 14 14.6 Q17.4 14.6 17.6 18 Z"/></svg>
<svg class="b" style="left:2359.5px;top:552.5px;" width="20" height="20" viewBox="0 0 24 24"><path fill="#757575" d="M12 2C6.48 2 2 6.48 2 12s4.48 10 10 10 10-4.48 10-10S17.52 2 12 2zm1 17h-2v-2h2v2zm2.07-7.75l-.9.92C13.45 12.9 13 13.5 13 15h-2v-.5c0-1.1.45-2.1 1.17-2.830l1.24-1.26c.37-.36.59-.86.59-1.41 0-1.1-.9-2-2-2s-2 .9-2 2H8c0-2.21 1.79-4 4-4s4 1.79 4 4c0 .88-.36 1.68-.93 2.25z"/></svg>
<svg class="b" style="left:2433.5px;top:555.0px;" width="15" height="17" viewBox="0 0 15 17"><rect x="0.7" y="0.7" width="13.6" height="15.6" fill="#fff" stroke="#757575" stroke-width="1.4"/><rect x="0" y="0" width="15" height="2.4" fill="#757575"/><rect x="2.4" y="5" width="1.4" height="1.3" fill="#757575"/><rect x="4.8" y="5" width="7.6" height="1.3" fill="#757575"/><rect x="2.4" y="8" width="1.4" height="1.3" fill="#757575"/><rect x="4.8" y="8" width="7.6" height="1.3" fill="#757575"/><rect x="2.4" y="11" width="1.4" height="1.3" fill="#757575"/><rect x="4.8" y="11" width="7.6" height="1.3" fill="#757575"/><rect x="2.4" y="13.6" width="1.4" height="1.3" fill="#757575"/><rect x="4.8" y="13.6" width="7.6" height="1.3" fill="#757575"/></svg>
<div class="b" style="left:2438.8px;top:543.0px;width:26.199999999999818px;height:18.0px;background:#1a56db;border-radius:9px"></div>
<div class="t" style="left:2444.60px;top:547.07px;font-size:10.79px;color:#fff;font-weight:700;">0/0</div>
<svg class="b" style="left:2494.7px;top:552.0px;" width="22" height="22" viewBox="0 0 24 24"><path fill="#666" d="M12 8c1.1 0 2-.9 2-2s-.9-2-2-2-2 .9-2 2 .9 2 2 2zm0 2c-1.1 0-2 .9-2 2s.9 2 2 2 2-.9 2-2-.9-2-2-2zm0 6c-1.1 0-2 .9-2 2s.9 2 2 2 2-.9 2-2-.9-2-2-2z"/></svg>
<div class="b" style="left:308px;top:595px;width:2227px;height:63px;background:#fff"></div>
<div class="b" style="left:308px;top:658px;width:2227px;height:1px;background:#dedede"></div>
<svg class="b" style="left:321.5px;top:619.0px;" width="16" height="16" viewBox="0 0 16 16"><rect x="1" y="1" width="14" height="14" rx="1.6" fill="none" stroke="#757575" stroke-width="2"/></svg>
<svg class="b" style="left:366.4px;top:602.0px;" width="48" height="48" viewBox="0 0 48 48"><circle cx="24" cy="24" r="20.6" fill="none" stroke="#efefef" stroke-width="5.4"/><path d="M24.72 3.41 A20.6 20.6 0 1 1 6.92 12.48" fill="none" stroke="#0c4a9c" stroke-width="5.4" stroke-linecap="round"/><circle cx="24" cy="24" r="14.6" fill="none" stroke="#12a3b3" stroke-width="5.6"/></svg>
<svg class="b" style="left:466.8px;top:617.5px;" width="15" height="18" viewBox="0 0 15 18"><path fill="#757575" d="M1 0 H9.2 L14.5 5.3 V16.8 Q14.5 17.8 13.5 17.8 H1 Q0 17.8 0 16.8 V1 Q0 0 1 0 Z"/><circle cx="7" cy="8.6" r="2" fill="#fff"/><path fill="#fff" d="M3.4 14.3 Q3.8 12 7 12 Q10.2 12 10.6 14.3 Z"/></svg>
<div class="t" style="left:524.40px;top:620.88px;font-size:11.60px;color:#333;font-weight:400;letter-spacing:-0.091px;">76716</div>
<div class="t" style="left:751.30px;top:620.44px;font-size:13.30px;color:#2f5fd8;font-weight:400;letter-spacing:-0.274px;">Megan Rivera</div>
<div class="t" style="left:1052.90px;top:620.89px;font-size:12.30px;color:#333;font-weight:400;letter-spacing:-0.127px;">Recruiter Review</div>
<div class="t" style="left:1578.00px;top:620.97px;font-size:12.20px;color:#333;font-weight:400;letter-spacing:-0.27px;">13 days ago</div>
<div class="t" style="left:1897.00px;top:620.97px;font-size:12.20px;color:#333;font-weight:400;letter-spacing:-0.002px;">1 month ago</div>
<svg class="b" style="left:2288.7px;top:618.0px;" width="18" height="18" viewBox="0 0 18 18"><path fill="none" stroke="#757575" stroke-width="1.5" d="M15.6 10.2 A7.6 7.6 0 1 0 9.2 16.3"/><path fill="none" stroke="#757575" stroke-width="2" d="M5.6 6.4 Q5.8 3.6 8.5 3.6 Q11.3 3.6 11.3 6.1 Q11.3 7.5 9.8 8.3 Q8.6 9 8.6 10.6"/><rect x="7.5" y="12" width="2.2" height="2.2" rx="0.5" fill="#757575"/><circle cx="14" cy="11.8" r="1.9" fill="#757575"/><path fill="#757575" d="M10.4 18 Q10.6 14.6 14 14.6 Q17.4 14.6 17.6 18 Z"/></svg>
<svg class="b" style="left:2359.5px;top:616.5px;" width="20" height="20" viewBox="0 0 24 24"><path fill="#757575" d="M12 2C6.48 2 2 6.48 2 12s4.48 10 10 10 10-4.48 10-10S17.52 2 12 2zm1 17h-2v-2h2v2zm2.07-7.75l-.9.92C13.45 12.9 13 13.5 13 15h-2v-.5c0-1.1.45-2.1 1.17-2.830l1.24-1.26c.37-.36.59-.86.59-1.41 0-1.1-.9-2-2-2s-2 .9-2 2H8c0-2.21 1.79-4 4-4s4 1.79 4 4c0 .88-.36 1.68-.93 2.25z"/></svg>
<svg class="b" style="left:2433.5px;top:619.0px;" width="15" height="17" viewBox="0 0 15 17"><rect x="0.7" y="0.7" width="13.6" height="15.6" fill="#fff" stroke="#757575" stroke-width="1.4"/><rect x="0" y="0" width="15" height="2.4" fill="#757575"/><rect x="2.4" y="5" width="1.4" height="1.3" fill="#757575"/><rect x="4.8" y="5" width="7.6" height="1.3" fill="#757575"/><rect x="2.4" y="8" width="1.4" height="1.3" fill="#757575"/><rect x="4.8" y="8" width="7.6" height="1.3" fill="#757575"/><rect x="2.4" y="11" width="1.4" height="1.3" fill="#757575"/><rect x="4.8" y="11" width="7.6" height="1.3" fill="#757575"/><rect x="2.4" y="13.6" width="1.4" height="1.3" fill="#757575"/><rect x="4.8" y="13.6" width="7.6" height="1.3" fill="#757575"/></svg>
<div class="b" style="left:2438.8px;top:607.0px;width:26.199999999999818px;height:18.0px;background:#1a56db;border-radius:9px"></div>
<div class="t" style="left:2444.60px;top:611.07px;font-size:10.79px;color:#fff;font-weight:700;">0/0</div>
<svg class="b" style="left:2494.7px;top:616.0px;" width="22" height="22" viewBox="0 0 24 24"><path fill="#666" d="M12 8c1.1 0 2-.9 2-2s-.9-2-2-2-2 .9-2 2 .9 2 2 2zm0 2c-1.1 0-2 .9-2 2s.9 2 2 2 2-.9 2-2-.9-2-2-2zm0 6c-1.1 0-2 .9-2 2s.9 2 2 2 2-.9 2-2-.9-2-2-2z"/></svg>
<div class="b" style="left:308px;top:659px;width:2227px;height:63px;background:#fff"></div>
<div class="b" style="left:308px;top:722px;width:2227px;height:1px;background:#dedede"></div>
<svg class="b" style="left:321.5px;top:683.0px;" width="16" height="16" viewBox="0 0 16 16"><rect x="1" y="1" width="14" height="14" rx="1.6" fill="none" stroke="#757575" stroke-width="2"/></svg>
<svg class="b" style="left:366.4px;top:666.0px;" width="48" height="48" viewBox="0 0 48 48"><circle cx="24" cy="24" r="20.6" fill="none" stroke="#efefef" stroke-width="5.4"/><path d="M24.72 3.41 A20.6 20.6 0 1 1 6.92 12.48" fill="none" stroke="#0c4a9c" stroke-width="5.4" stroke-linecap="round"/><circle cx="24" cy="24" r="14.6" fill="none" stroke="#12a3b3" stroke-width="5.6"/></svg>
<svg class="b" style="left:466.8px;top:681.5px;" width="15" height="18" viewBox="0 0 15 18"><path fill="#757575" d="M1 0 H9.2 L14.5 5.3 V16.8 Q14.5 17.8 13.5 17.8 H1 Q0 17.8 0 16.8 V1 Q0 0 1 0 Z"/><circle cx="7" cy="8.6" r="2" fill="#fff"/><path fill="#fff" d="M3.4 14.3 Q3.8 12 7 12 Q10.2 12 10.6 14.3 Z"/></svg>
<div class="t" style="left:524.40px;top:684.88px;font-size:11.60px;color:#333;font-weight:400;letter-spacing:-0.091px;">76723</div>
<div class="t" style="left:751.30px;top:684.44px;font-size:13.30px;color:#2f5fd8;font-weight:400;letter-spacing:0.059px;">Kim Anderson</div>
<div class="t" style="left:1052.90px;top:684.89px;font-size:12.30px;color:#333;font-weight:400;letter-spacing:-0.127px;">Recruiter Review</div>
<div class="t" style="left:1578.00px;top:684.97px;font-size:12.20px;color:#333;font-weight:400;letter-spacing:-0.27px;">13 days ago</div>
<div class="t" style="left:1897.00px;top:684.97px;font-size:12.20px;color:#333;font-weight:400;letter-spacing:-0.002px;">1 month ago</div>
<svg class="b" style="left:2288.7px;top:682.0px;" width="18" height="18" viewBox="0 0 18 18"><path fill="none" stroke="#757575" stroke-width="1.5" d="M15.6 10.2 A7.6 7.6 0 1 0 9.2 16.3"/><path fill="none" stroke="#757575" stroke-width="2" d="M5.6 6.4 Q5.8 3.6 8.5 3.6 Q11.3 3.6 11.3 6.1 Q11.3 7.5 9.8 8.3 Q8.6 9 8.6 10.6"/><rect x="7.5" y="12" width="2.2" height="2.2" rx="0.5" fill="#757575"/><circle cx="14" cy="11.8" r="1.9" fill="#757575"/><path fill="#757575" d="M10.4 18 Q10.6 14.6 14 14.6 Q17.4 14.6 17.6 18 Z"/></svg>
<svg class="b" style="left:2359.5px;top:680.5px;" width="20" height="20" viewBox="0 0 24 24"><path fill="#757575" d="M12 2C6.48 2 2 6.48 2 12s4.48 10 10 10 10-4.48 10-10S17.52 2 12 2zm1 17h-2v-2h2v2zm2.07-7.75l-.9.92C13.45 12.9 13 13.5 13 15h-2v-.5c0-1.1.45-2.1 1.17-2.830l1.24-1.26c.37-.36.59-.86.59-1.41 0-1.1-.9-2-2-2s-2 .9-2 2H8c0-2.21 1.79-4 4-4s4 1.79 4 4c0 .88-.36 1.68-.93 2.25z"/></svg>
<svg class="b" style="left:2433.5px;top:683.0px;" width="15" height="17" viewBox="0 0 15 17"><rect x="0.7" y="0.7" width="13.6" height="15.6" fill="#fff" stroke="#757575" stroke-width="1.4"/><rect x="0" y="0" width="15" height="2.4" fill="#757575"/><rect x="2.4" y="5" width="1.4" height="1.3" fill="#757575"/><rect x="4.8" y="5" width="7.6" height="1.3" fill="#757575"/><rect x="2.4" y="8" width="1.4" height="1.3" fill="#757575"/><rect x="4.8" y="8" width="7.6" height="1.3" fill="#757575"/><rect x="2.4" y="11" width="1.4" height="1.3" fill="#757575"/><rect x="4.8" y="11" width="7.6" height="1.3" fill="#757575"/><rect x="2.4" y="13.6" width="1.4" height="1.3" fill="#757575"/><rect x="4.8" y="13.6" width="7.6" height="1.3" fill="#757575"/></svg>
<div class="b" style="left:2438.8px;top:671.0px;width:26.199999999999818px;height:18.0px;background:#1a56db;border-radius:9px"></div>
<div class="t" style="left:2444.60px;top:675.07px;font-size:10.79px;color:#fff;font-weight:700;">0/0</div>
<svg class="b" style="left:2494.7px;top:680.0px;" width="22" height="22" viewBox="0 0 24 24"><path fill="#666" d="M12 8c1.1 0 2-.9 2-2s-.9-2-2-2-2 .9-2 2 .9 2 2 2zm0 2c-1.1 0-2 .9-2 2s.9 2 2 2 2-.9 2-2-.9-2-2-2zm0 6c-1.1 0-2 .9-2 2s.9 2 2 2 2-.9 2-2-.9-2-2-2z"/></svg>
<div class="b" style="left:308px;top:723px;width:2227px;height:63px;background:#fff"></div>
<div class="b" style="left:308px;top:786px;width:2227px;height:1px;background:#dedede"></div>
<svg class="b" style="left:321.5px;top:747.0px;" width="16" height="16" viewBox="0 0 16 16"><rect x="1" y="1" width="14" height="14" rx="1.6" fill="none" stroke="#757575" stroke-width="2"/></svg>
<svg class="b" style="left:366.4px;top:730.0px;" width="48" height="48" viewBox="0 0 48 48"><circle cx="24" cy="24" r="20.6" fill="none" stroke="#efefef" stroke-width="5.4"/><path d="M24.72 3.41 A20.6 20.6 0 1 1 6.92 12.48" fill="none" stroke="#0c4a9c" stroke-width="5.4" stroke-linecap="round"/><circle cx="24" cy="24" r="14.6" fill="none" stroke="#12a3b3" stroke-width="5.6"/></svg>
<svg class="b" style="left:466.8px;top:745.5px;" width="15" height="18" viewBox="0 0 15 18"><path fill="#757575" d="M1 0 H9.2 L14.5 5.3 V16.8 Q14.5 17.8 13.5 17.8 H1 Q0 17.8 0 16.8 V1 Q0 0 1 0 Z"/><circle cx="7" cy="8.6" r="2" fill="#fff"/><path fill="#fff" d="M3.4 14.3 Q3.8 12 7 12 Q10.2 12 10.6 14.3 Z"/></svg>
<div class="t" style="left:524.40px;top:748.88px;font-size:11.60px;color:#333;font-weight:400;letter-spacing:-0.091px;">76999</div>
<div class="t" style="left:751.30px;top:748.44px;font-size:13.30px;color:#2f5fd8;font-weight:400;letter-spacing:-0.23px;">Dan Quest</div>
<div class="t" style="left:1052.90px;top:748.89px;font-size:12.30px;color:#333;font-weight:400;letter-spacing:0.02px;">TextApply</div>
<div class="t" style="left:1578.00px;top:748.97px;font-size:12.20px;color:#333;font-weight:400;letter-spacing:-0.268px;">5 days ago</div>
<div class="t" style="left:1897.00px;top:748.97px;font-size:12.20px;color:#333;font-weight:400;letter-spacing:-0.002px;">1 month ago</div>
<svg class="b" style="left:2288.7px;top:746.0px;" width="18" height="18" viewBox="0 0 18 18"><path fill="none" stroke="#757575" stroke-width="1.5" d="M15.6 10.2 A7.6 7.6 0 1 0 9.2 16.3"/><path fill="none" stroke="#757575" stroke-width="2" d="M5.6 6.4 Q5.8 3.6 8.5 3.6 Q11.3 3.6 11.3 6.1 Q11.3 7.5 9.8 8.3 Q8.6 9 8.6 10.6"/><rect x="7.5" y="12" width="2.2" height="2.2" rx="0.5" fill="#757575"/><circle cx="14" cy="11.8" r="1.9" fill="#757575"/><path fill="#757575" d="M10.4 18 Q10.6 14.6 14 14.6 Q17.4 14.6 17.6 18 Z"/></svg>
<svg class="b" style="left:2359.5px;top:744.5px;" width="20" height="20" viewBox="0 0 24 24"><path fill="#757575" d="M12 2C6.48 2 2 6.48 2 12s4.48 10 10 10 10-4.48 10-10S17.52 2 12 2zm1 17h-2v-2h2v2zm2.07-7.75l-.9.92C13.45 12.9 13 13.5 13 15h-2v-.5c0-1.1.45-2.1 1.17-2.830l1.24-1.26c.37-.36.59-.86.59-1.41 0-1.1-.9-2-2-2s-2 .9-2 2H8c0-2.21 1.79-4 4-4s4 1.79 4 4c0 .88-.36 1.68-.93 2.25z"/></svg>
<svg class="b" style="left:2433.5px;top:747.0px;" width="15" height="17" viewBox="0 0 15 17"><rect x="0.7" y="0.7" width="13.6" height="15.6" fill="#fff" stroke="#757575" stroke-width="1.4"/><rect x="0" y="0" width="15" height="2.4" fill="#757575"/><rect x="2.4" y="5" width="1.4" height="1.3" fill="#757575"/><rect x="4.8" y="5" width="7.6" height="1.3" fill="#757575"/><rect x="2.4" y="8" width="1.4" height="1.3" fill="#757575"/><rect x="4.8" y="8" width="7.6" height="1.3" fill="#757575"/><rect x="2.4" y="11" width="1.4" height="1.3" fill="#757575"/><rect x="4.8" y="11" width="7.6" height="1.3" fill="#757575"/><rect x="2.4" y="13.6" width="1.4" height="1.3" fill="#757575"/><rect x="4.8" y="13.6" width="7.6" height="1.3" fill="#757575"/></svg>
<div class="b" style="left:2438.8px;top:735.0px;width:26.199999999999818px;height:18.0px;background:#1a56db;border-radius:9px"></div>
<div class="t" style="left:2444.60px;top:739.07px;font-size:10.79px;color:#fff;font-weight:700;">0/0</div>
<svg class="b" style="left:2494.7px;top:744.0px;" width="22" height="22" viewBox="0 0 24 24"><path fill="#666" d="M12 8c1.1 0 2-.9 2-2s-.9-2-2-2-2 .9-2 2 .9 2 2 2zm0 2c-1.1 0-2 .9-2 2s.9 2 2 2 2-.9 2-2-.9-2-2-2zm0 6c-1.1 0-2 .9-2 2s.9 2 2 2 2-.9 2-2-.9-2-2-2z"/></svg>
<div class="b" style="left:308px;top:787px;width:2227px;height:63px;background:#fff"></div>
<div class="b" style="left:308px;top:850px;width:2227px;height:1px;background:#dedede"></div>
<svg class="b" style="left:321.5px;top:811.0px;" width="16" height="16" viewBox="0 0 16 16"><rect x="1" y="1" width="14" height="14" rx="1.6" fill="none" stroke="#757575" stroke-width="2"/></svg>
<svg class="b" style="left:366.4px;top:794.0px;" width="48" height="48" viewBox="0 0 48 48"><circle cx="24" cy="24" r="20.6" fill="none" stroke="#efefef" stroke-width="5.4"/><path d="M24.72 3.41 A20.6 20.6 0 1 1 6.92 12.48" fill="none" stroke="#0c4a9c" stroke-width="5.4" stroke-linecap="round"/><circle cx="24" cy="24" r="14.6" fill="none" stroke="#12a3b3" stroke-width="5.6"/></svg>
<svg class="b" style="left:466.8px;top:809.5px;" width="15" height="18" viewBox="0 0 15 18"><path fill="#757575" d="M1 0 H9.2 L14.5 5.3 V16.8 Q14.5 17.8 13.5 17.8 H1 Q0 17.8 0 16.8 V1 Q0 0 1 0 Z"/><circle cx="7" cy="8.6" r="2" fill="#fff"/><path fill="#fff" d="M3.4 14.3 Q3.8 12 7 12 Q10.2 12 10.6 14.3 Z"/></svg>
<div class="t" style="left:524.40px;top:812.88px;font-size:11.60px;color:#333;font-weight:400;letter-spacing:-0.091px;">77040</div>
<div class="t" style="left:751.30px;top:812.44px;font-size:13.30px;color:#2f5fd8;font-weight:400;letter-spacing:-0.308px;">Eileen Raagas</div>
<div class="t" style="left:1052.90px;top:812.89px;font-size:12.30px;color:#333;font-weight:400;letter-spacing:0.021px;">External Applicants</div>
<div class="t" style="left:1578.00px;top:812.97px;font-size:12.20px;color:#333;font-weight:400;letter-spacing:-0.27px;">18 days ago</div>
<div class="t" style="left:1897.00px;top:812.97px;font-size:12.20px;color:#333;font-weight:400;letter-spacing:-0.315px;">17 days ago</div>
<svg class="b" style="left:2288.7px;top:810.0px;" width="18" height="18" viewBox="0 0 18 18"><path fill="none" stroke="#757575" stroke-width="1.5" d="M15.6 10.2 A7.6 7.6 0 1 0 9.2 16.3"/><path fill="none" stroke="#757575" stroke-width="2" d="M5.6 6.4 Q5.8 3.6 8.5 3.6 Q11.3 3.6 11.3 6.1 Q11.3 7.5 9.8 8.3 Q8.6 9 8.6 10.6"/><rect x="7.5" y="12" width="2.2" height="2.2" rx="0.5" fill="#757575"/><circle cx="14" cy="11.8" r="1.9" fill="#757575"/><path fill="#757575" d="M10.4 18 Q10.6 14.6 14 14.6 Q17.4 14.6 17.6 18 Z"/></svg>
<svg class="b" style="left:2359.5px;top:808.5px;" width="20" height="20" viewBox="0 0 24 24"><path fill="#757575" d="M11 18h2v-2h-2v2zm1-16C6.48 2 2 6.48 2 12s4.48 10 10 10 10-4.48 10-10S17.52 2 12 2zm0 18c-4.41 0-8-3.59-8-8s3.59-8 8-8 8 3.59 8 8-3.59 8-8 8zm0-14c-2.21 0-4 1.79-4 4h2c0-1.1.9-2 2-2s2 .9 2 2c0 2-3 1.75-3 5h2c0-2.25 3-2.5 3-5 0-2.21-1.79-4-4-4z"/></svg>
<svg class="b" style="left:2433.5px;top:811.0px;" width="15" height="17" viewBox="0 0 15 17"><rect x="0.7" y="0.7" width="13.6" height="15.6" fill="#fff" stroke="#757575" stroke-width="1.4"/><rect x="0" y="0" width="15" height="2.4" fill="#757575"/><rect x="2.4" y="5" width="1.4" height="1.3" fill="#757575"/><rect x="4.8" y="5" width="7.6" height="1.3" fill="#757575"/><rect x="2.4" y="8" width="1.4" height="1.3" fill="#757575"/><rect x="4.8" y="8" width="7.6" height="1.3" fill="#757575"/><rect x="2.4" y="11" width="1.4" height="1.3" fill="#757575"/><rect x="4.8" y="11" width="7.6" height="1.3" fill="#757575"/><rect x="2.4" y="13.6" width="1.4" height="1.3" fill="#757575"/><rect x="4.8" y="13.6" width="7.6" height="1.3" fill="#757575"/></svg>
<div class="b" style="left:2438.8px;top:799.0px;width:26.199999999999818px;height:18.0px;background:#1a56db;border-radius:9px"></div>
<div class="t" style="left:2444.60px;top:803.07px;font-size:10.79px;color:#fff;font-weight:700;">0/0</div>
<svg class="b" style="left:2494.7px;top:808.0px;" width="22" height="22" viewBox="0 0 24 24"><path fill="#666" d="M12 8c1.1 0 2-.9 2-2s-.9-2-2-2-2 .9-2 2 .9 2 2 2zm0 2c-1.1 0-2 .9-2 2s.9 2 2 2 2-.9 2-2-.9-2-2-2zm0 6c-1.1 0-2 .9-2 2s.9 2 2 2 2-.9 2-2-.9-2-2-2z"/></svg>
<div class="b" style="left:308px;top:851px;width:2227px;height:8px;overflow:hidden">
</div>
<div class="b" style="left:388px;top:859px;width:8px;height:1px;background:#5a82c0"></div>
<div class="b" style="left:2535px;top:186px;width:15px;height:674px;background:#fbfbfb"></div>
<svg class="b" style="left:2537.5px;top:190.5px;" width="10" height="8" viewBox="0 0 10 8"><path d="M5 0.4 L9.7 7.7 H0.3 Z" fill="#8a8a8a" stroke="#8a8a8a" stroke-width="0.6" stroke-linejoin="round"/></svg>
<div class="b" style="left:2538px;top:204px;width:9px;height:252px;background:#8a8a8a;border-radius:4.5px"></div>
<svg class="b" style="left:2537.5px;top:848.5px;" width="10" height="8" viewBox="0 0 10 8"><path d="M0.3 0.3 H9.7 L5 7.6 Z" fill="#8a8a8a" stroke="#8a8a8a" stroke-width="0.6" stroke-linejoin="round"/></svg>
<div class="t" style="left:2277.20px;top:877.91px;font-size:11.33px;color:#333;font-weight:400;">25</div>
<svg class="b" style="left:2296px;top:881px;" width="9" height="6" viewBox="0 0 9 6"><path d="M0 0 H9 L4.5 5.5 Z" fill="#555"/></svg>
<div class="t" style="left:2340.20px;top:877.79px;font-size:11.47px;color:#333;font-weight:400;">1–25 of 73</div>
<svg class="b" style="left:2410.5px;top:873.1px;" width="22" height="22" viewBox="0 0 24 24"><path fill="#bdbdbd" d="M18.41 16.59L13.82 12l4.59-4.59L17 6l-6 6 6 6zM6 6h2v12H6z"/></svg>
<svg class="b" style="left:2445.8px;top:873.1px;" width="22" height="22" viewBox="0 0 24 24"><path fill="#bdbdbd" d="M15.41 7.41L14 6l-6 6 6 6 1.41-1.41L10.83 12z"/></svg>
<svg class="b" style="left:2481.1px;top:873.1px;" width="22" height="22" viewBox="0 0 24 24"><path fill="#757575" d="M10 6L8.59 7.41 13.17 12l-4.58 4.59L10 18l6-6z"/></svg>
<svg class="b" style="left:2517px;top:873.1px;" width="22" height="22" viewBox="0 0 24 24"><path fill="#757575" d="M5.59 7.41L10.18 12l-4.59 4.59L7 18l6-6-6-6zM16 6h2v12h-2z"/></svg>
<div class="b" style="left:402px;top:202px;width:287px;height:210px;background:#fff;border-radius:6px;box-shadow:0 3px 8px rgba(0,0,0,0.3);z-index:3"></div>
<div style="position:absolute;left:0;top:0;z-index:4">
<svg class="b" style="left:394px;top:297px;" width="10" height="16" viewBox="0 0 10 16"><path d="M10 0 L1 8 L10 16 Z" fill="#fff"/></svg>
<div class="t" style="left:417.30px;top:220.24px;font-size:13.30px;color:#333;font-weight:400;letter-spacing:0.425px;">Match of</div>
<div class="t" style="left:417.30px;top:242.14px;font-size:13.30px;color:#333;font-weight:400;letter-spacing:0.46px;">skills and</div>
<div class="t" style="left:417.30px;top:264.04px;font-size:13.30px;color:#333;font-weight:400;letter-spacing:0.444px;">experience</div>
<div class="t" style="left:417.30px;top:285.34px;font-size:13.30px;color:#333;font-weight:400;letter-spacing:0.596px;">to this role.</div>
<div class="t" style="left:511.10px;top:222.21px;font-size:11.92px;color:#333;font-weight:700;">Experience match</div>
<div class="b" style="left:511px;top:238px;width:164px;height:9px;background:#ebebeb;border-radius:4.5px"></div>
<div class="b" style="left:511px;top:238px;width:139.5px;height:9px;background:#1769e0;border-radius:4.5px 0 0 4.5px"></div>
<div class="t" style="left:511.10px;top:266.82px;font-size:12.03px;color:#333;font-weight:700;">Skills match</div>
<div class="b" style="left:511px;top:283px;width:164px;height:9px;background:#ebebeb;border-radius:4.5px"></div>
<div class="b" style="left:511px;top:283px;width:135px;height:9px;background:#1769e0;border-radius:4.5px 0 0 4.5px"></div>
<div class="b" style="left:417px;top:317px;width:258px;height:1px;background:#c4c4c4"></div>
<div class="t" style="left:417.30px;top:336.54px;font-size:13.30px;color:#333;font-weight:400;letter-spacing:0.472px;">Tier of</div>
<div class="t" style="left:417.30px;top:358.04px;font-size:13.30px;color:#333;font-weight:400;letter-spacing:0.542px;">matched</div>
<div class="t" style="left:417.30px;top:380.14px;font-size:13.30px;color:#333;font-weight:400;letter-spacing:0.603px;">candidate</div>
<div class="t" style="left:511.10px;top:338.30px;font-size:12.05px;color:#333;font-weight:700;">Tier 1 of 3</div>
<div class="b" style="left:511px;top:354px;width:164px;height:9px;background:#0aa3b1;border-radius:4.5px"></div>
</div>
</body></html>
